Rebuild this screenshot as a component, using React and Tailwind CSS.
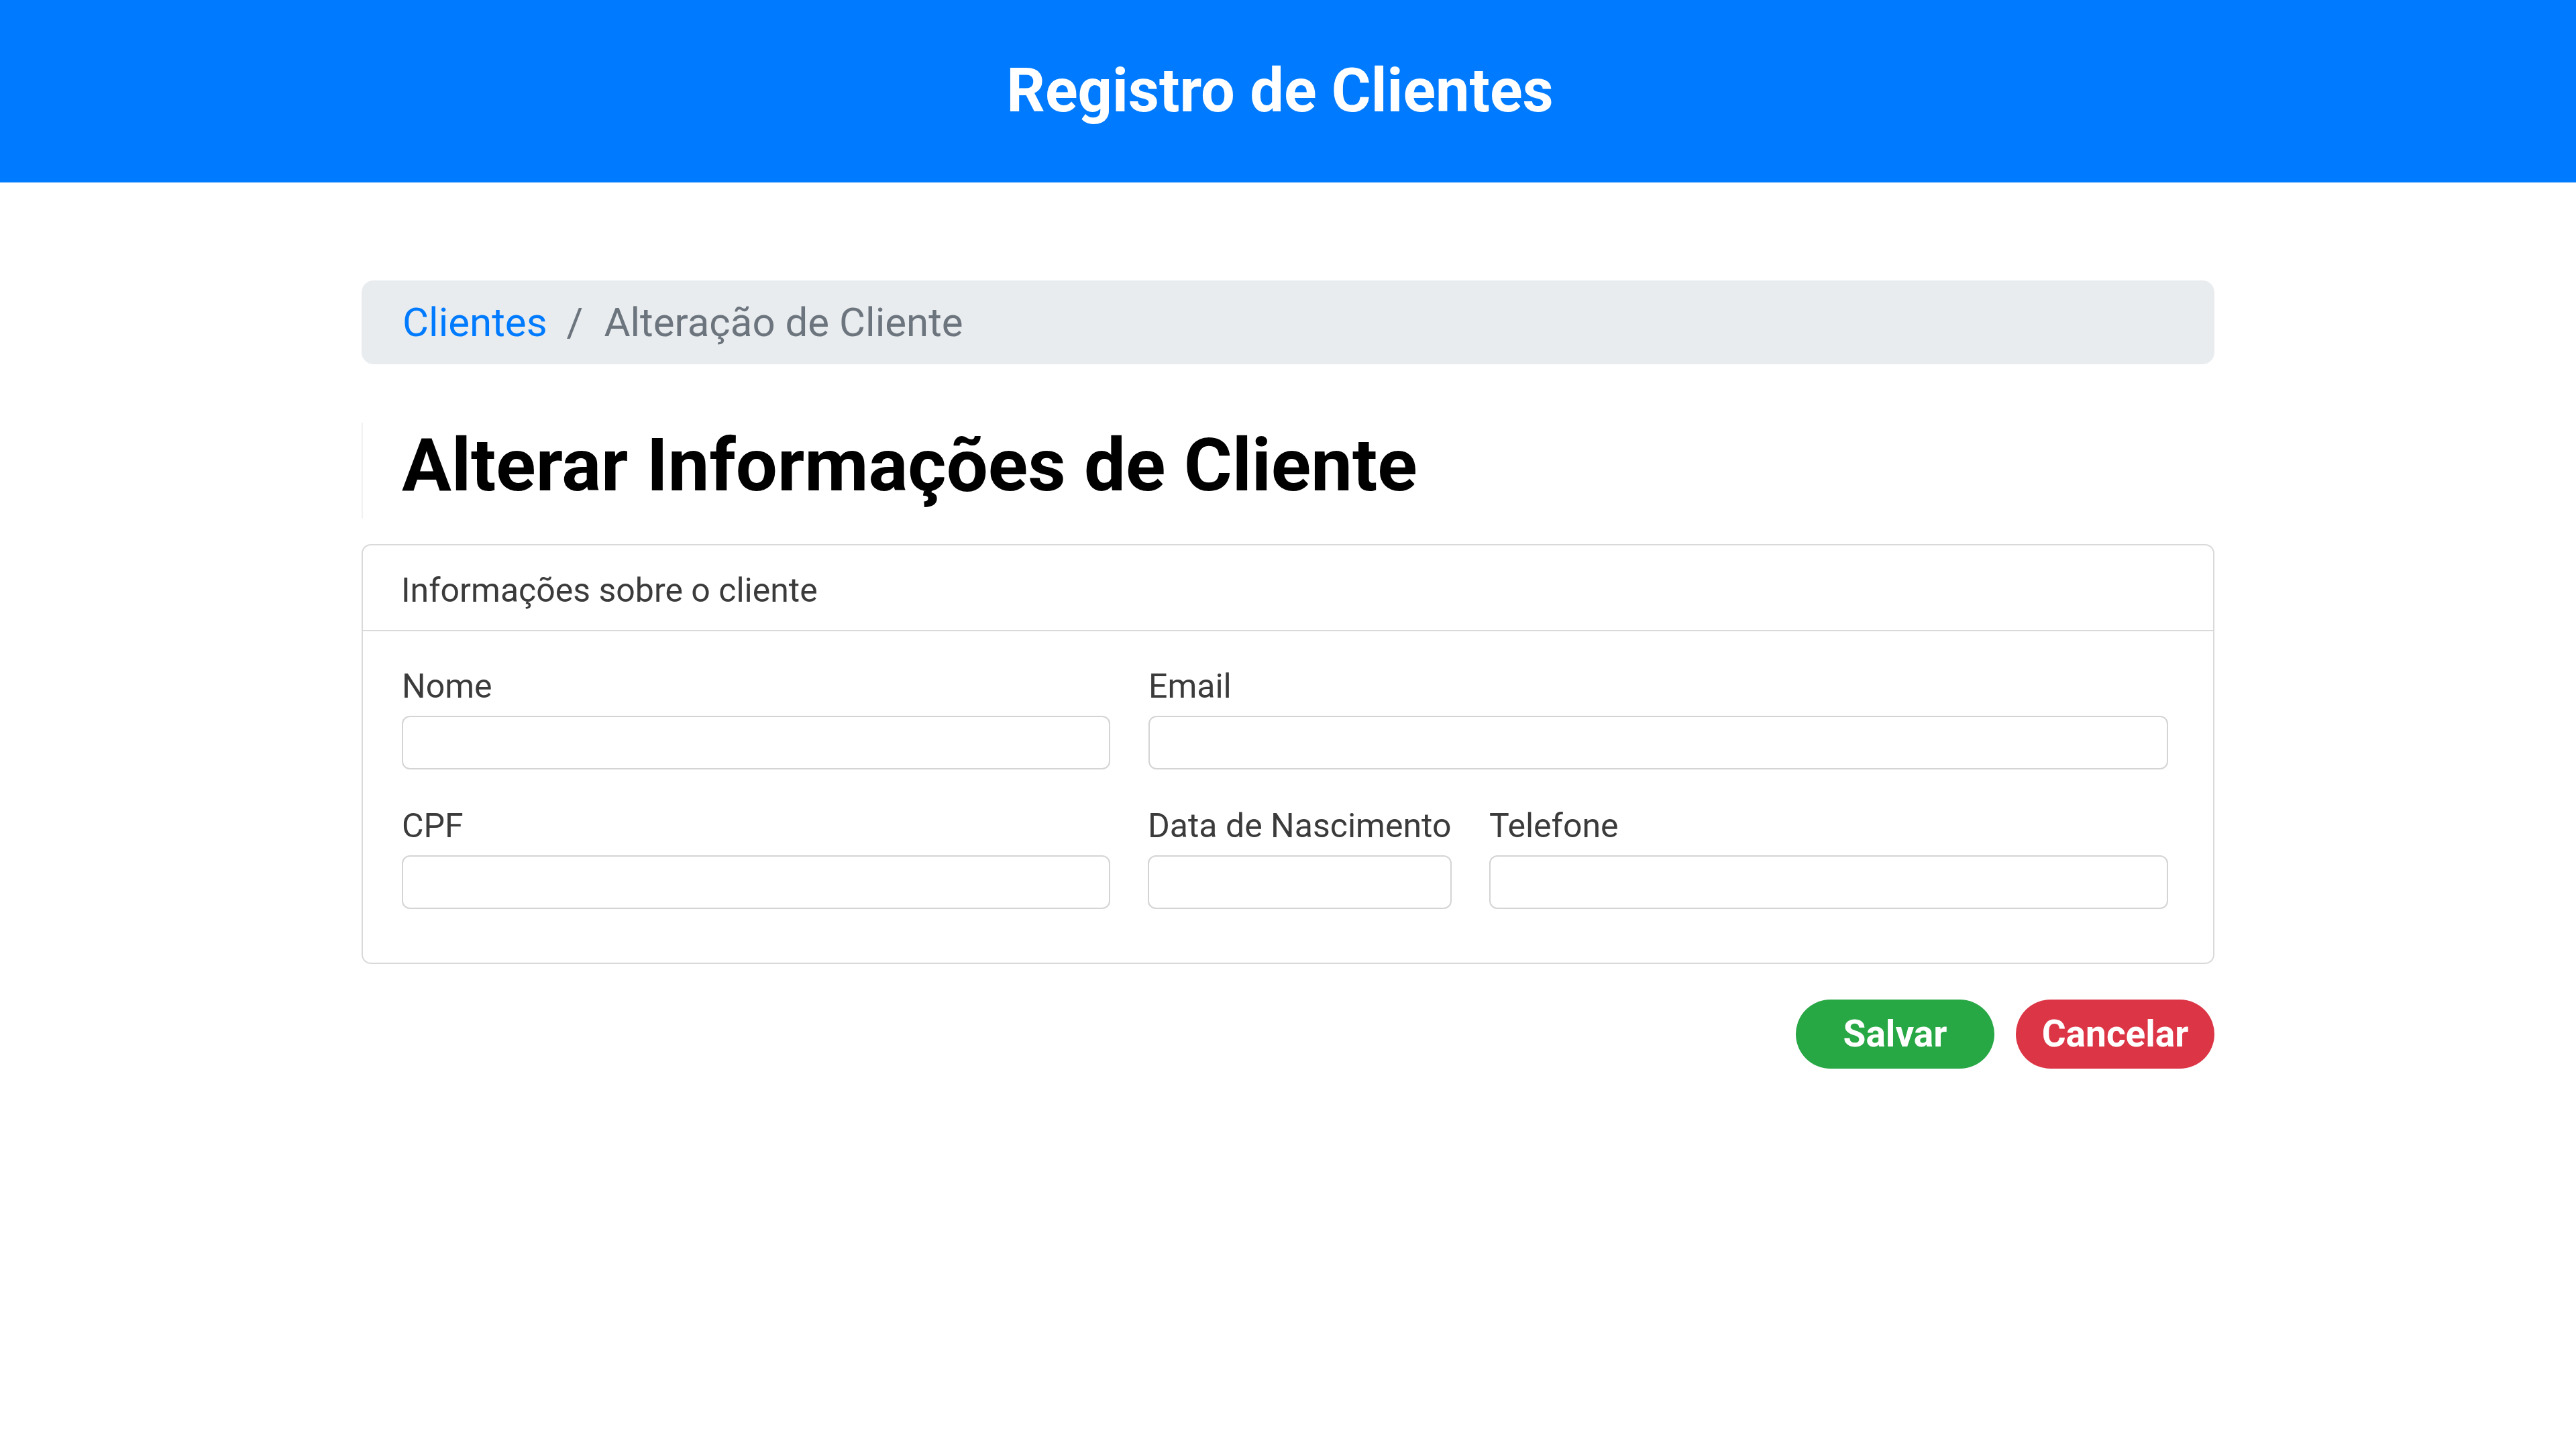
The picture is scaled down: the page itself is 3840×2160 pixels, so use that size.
import React from 'react';

const Field = ({ label, width }) => (
  <div className={`flex flex-col ${width}`}>
    <label className="text-[50px] leading-[76px] text-[#3b3b3b] whitespace-nowrap">{label}</label>
    <input type="text" className="mt-[6px] h-[80px] w-full rounded-[12px] border-2 border-[#d4d4d4] bg-white outline-none" />
  </div>
);

export default function App() {
  return (
    <div className="min-h-screen bg-white" style={{ fontFamily: 'Roboto, "Liberation Sans", sans-serif' }}>
      <header className="h-[272px] bg-[#007bff] flex items-center justify-center pr-[24px]">
        <h1 className="text-[90px] font-bold text-white leading-none">Registro de Clientes</h1>
      </header>

      <main className="w-[2762px] mx-auto pt-[146px]">
        {/* breadcrumb */}
        <nav className="h-[125px] rounded-[18px] bg-[#e9ecef] flex items-center pl-[61px] text-[60px]">
          <a href="#" className="text-[#007bff]">Clientes</a>
          <span className="ml-[29px] mr-[31px] text-[#6c757d]">/</span>
          <span className="text-[#6c757d]">Alteração de Cliente</span>
        </nav>

        <div className="mt-[87px] h-[143px] border-l-2 border-[#f1f1f1] pl-[58px]">
          <h2 className="text-[110px] font-bold leading-[128px] text-black">Alterar Informações de Cliente</h2>
        </div>

        {/* card */}
        <div className="mt-[38px] rounded-[14px] border-2 border-[#d9d9d9]">
          <div className="border-b-2 border-[#d9d9d9] pl-[57px] pt-[28px] pb-[20px] text-[50px] leading-[78px] text-[#3b3b3b]">
            Informações sobre o cliente
          </div>
          <div className="pl-[58px] pr-[67px] pt-[44px] pb-[80px]">
            <div className="flex gap-[57px]">
              <Field label="Nome" width="w-[1056px]" />
              <Field label="Email" width="flex-1" />
            </div>
            <div className="flex gap-[56px] mt-[46px]">
              <Field label="CPF" width="w-[1056px]" />
              <Field label="Data de Nascimento" width="w-[453px]" />
              <Field label="Telefone" width="flex-1" />
            </div>
          </div>
        </div>

        <div className="mt-[53px] flex justify-end gap-[32px]">
          <button className="w-[296px] h-[103px] rounded-full bg-[#28a745] text-white text-[55px] font-bold">Salvar</button>
          <button className="w-[296px] h-[103px] rounded-full bg-[#dc3545] text-white text-[55px] font-bold">Cancelar</button>
        </div>
      </main>
    </div>
  );
}
